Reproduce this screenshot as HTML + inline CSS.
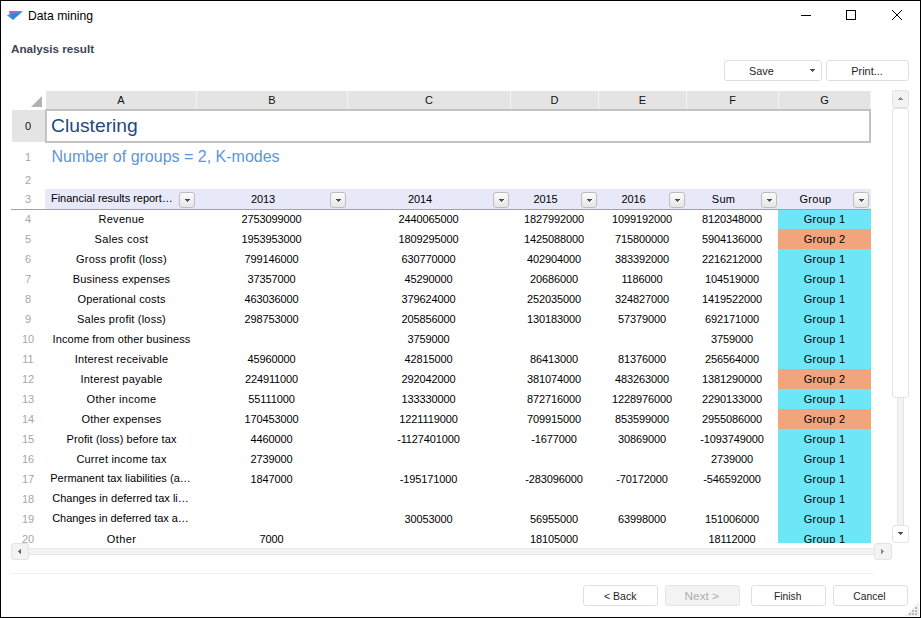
<!DOCTYPE html>
<html><head><meta charset="utf-8"><title>Data mining</title>
<style>
*{box-sizing:border-box;margin:0;padding:0}
html,body{width:921px;height:618px;overflow:hidden;background:#fff}
body{font-family:"Liberation Sans",sans-serif;position:relative}
#win{position:absolute;left:0;top:0;width:921px;height:618px;border:1px solid #000;background:#fff;overflow:hidden}
.a{position:absolute;white-space:nowrap}
#title{left:27px;top:7px;font-size:12.2px;line-height:16px;color:#000}
#sub{left:10px;top:41px;font-size:11.68px;line-height:14px;font-weight:bold;color:#3d4555}
.btn{position:absolute;border:1px solid #dfdfdf;border-radius:3px;background:#fff;font-size:11.8px;line-height:19px;height:21px;padding-top:1px;text-align:center;color:#1e1e1e}
.btn span.t{display:inline-block;margin-right:1.4px;transform:scaleX(.875);transform-origin:50% 50%}
.btn.dis{background:#f3f3f3;color:#aeaeb4;border-color:#e4e4e4}
#sheet{position:absolute;left:0;top:0;width:921px;height:542px;overflow:hidden;font-size:11px;color:#000}
.n{letter-spacing:-0.12px}
.l{letter-spacing:0.27px}
.ch{position:absolute;top:90px;height:18px;background:#e4e4e4;text-align:center;font-size:11px;line-height:18px;color:#111;border-right:1px solid #f3f3f3}
.rn{position:absolute;left:10px;width:34px;text-align:center;color:#a6a6a6;font-size:11px}
.c{position:absolute;text-align:center;white-space:nowrap;overflow:hidden}
.g1{background:#6de7f7}
.g2{background:#f2a57d}
.h3{background:#e7e9f8}
.dd{position:absolute;width:16px;height:16px;border:1px solid #bebebe;border-radius:3px;background:linear-gradient(#fbfbfb,#e6e6e6)}
.dd:after,.ar{content:"";position:absolute;left:7px;top:8px;width:1px;height:1px;background:#606060;box-shadow:-1px -1px 0 #555,1px -1px 0 #555,0 -1px 0 #555,-2px -2px 0 #4c4c4c,-1px -2px 0 #4c4c4c,0 -2px 0 #4c4c4c,1px -2px 0 #4c4c4c,2px -2px 0 #4c4c4c}
</style></head><body><div id="win">

<svg class="a" style="left:6px;top:10px" width="18" height="11" viewBox="0 0 18 11"><polygon points="1.8,0.1 15.9,0.1 8.6,2.6 2.8,3.6" fill="#b560c4"/><polygon points="15.9,0.2 6,9 0.2,4.3 3.8,3.1" fill="#2b8bd8"/><polygon points="0.2,4.3 3.7,3.2 4.4,7.6" fill="#5b88c9"/></svg>
<div id="title" class="a">Data mining</div>
<svg class="a" style="left:799px;top:8px" width="110" height="14" viewBox="0 0 110 14"><path d="M1 6.5H11" stroke="#000" stroke-width="1" fill="none"/><rect x="46.5" y="1.5" width="9" height="9" stroke="#000" stroke-width="1" fill="none"/><path d="M92 1L102 11M102 1L92 11" stroke="#000" stroke-width="1" fill="none"/></svg>
<div id="sub" class="a">Analysis result</div>
<div class="btn" style="left:723px;top:59px;width:98px;padding-right:22px"><span class="t" style="transform:scaleX(0.92)">Save</span><span class="ar" style="left:87px;top:10px"></span></div>
<div class="btn" style="left:825px;top:59px;width:83px"><span class="t" style="transform:scaleX(0.93)">Print...</span></div>
<div id="sheet">
<svg class="a" style="left:30px;top:95px" width="11" height="11"><polygon points="11,0 11,11 0,11" fill="#b2b2b2"/></svg>
<div class="ch" style="left:45px;width:151px">A</div>
<div class="ch" style="left:196px;width:151px">B</div>
<div class="ch" style="left:347px;width:163px">C</div>
<div class="ch" style="left:510px;width:88px">D</div>
<div class="ch" style="left:598px;width:88px">E</div>
<div class="ch" style="left:686px;width:92px">F</div>
<div class="ch" style="left:778px;width:92px">G</div>
<div class="rn" style="top:109px;height:32px;line-height:32px;background:#e4e4e4;color:#111;left:11px;text-indent:-2px;">0</div>
<div class="rn" style="top:141px;height:30px;line-height:30px;">1</div>
<div class="rn" style="top:171px;height:17px;line-height:17px;">2</div>
<div class="rn" style="top:188px;height:20px;line-height:20px;">3</div>
<div class="a" style="left:44px;top:108px;width:826px;height:34px;border:2px solid #c3c3c3;background:#fff"></div>
<div class="a" style="left:50.1px;top:112.6px;font-size:19.25px;line-height:24px;color:#1f497d">Clustering</div>
<div class="a" style="left:50.5px;top:146px;font-size:16px;line-height:20px;color:#5f95d9">Number of groups = 2, K-modes</div>
<div class="a h3" style="left:44px;top:188px;width:826px;height:20px"></div>
<div class="c l" style="left:50px;top:187px;width:129px;height:20px;line-height:20px;text-align:left;letter-spacing:-0.02px;">Financial results report…</div>
<div class="dd" style="left:178px;top:191px"></div>
<div class="c n" style="left:195px;top:188px;width:134px;height:20px;line-height:20px">2013</div>
<div class="dd" style="left:329px;top:191px"></div>
<div class="c n" style="left:346px;top:188px;width:146px;height:20px;line-height:20px">2014</div>
<div class="dd" style="left:492px;top:191px"></div>
<div class="c n" style="left:509px;top:188px;width:71px;height:20px;line-height:20px">2015</div>
<div class="dd" style="left:580px;top:191px"></div>
<div class="c n" style="left:597px;top:188px;width:71px;height:20px;line-height:20px">2016</div>
<div class="dd" style="left:668px;top:191px"></div>
<div class="c l" style="left:685px;top:188px;width:75px;height:20px;line-height:20px">Sum</div>
<div class="dd" style="left:760px;top:191px"></div>
<div class="c l" style="left:777px;top:188px;width:75px;height:20px;line-height:20px">Group</div>
<div class="dd" style="left:852px;top:191px"></div>
<div class="rn" style="top:208px;height:20px;line-height:20px">4</div>
<div class="c l" style="left:45px;top:208px;width:151px;height:20px;line-height:20px;letter-spacing:0.29px;">Revenue</div>
<div class="c n" style="left:195px;top:208px;width:151px;height:20px;line-height:20px">2753099000</div>
<div class="c n" style="left:346px;top:208px;width:163px;height:20px;line-height:20px">2440065000</div>
<div class="c n" style="left:509px;top:208px;width:88px;height:20px;line-height:20px">1827992000</div>
<div class="c n" style="left:597px;top:208px;width:88px;height:20px;line-height:20px">1099192000</div>
<div class="c n" style="left:685px;top:208px;width:92px;height:20px;line-height:20px">8120348000</div>
<div class="c l g1" style="left:777px;top:208px;width:93px;height:20px;line-height:20px">Group 1</div>
<div class="rn" style="top:228px;height:20px;line-height:20px">5</div>
<div class="c l" style="left:45px;top:228px;width:151px;height:20px;line-height:20px;letter-spacing:0.31px;">Sales cost</div>
<div class="c n" style="left:195px;top:228px;width:151px;height:20px;line-height:20px">1953953000</div>
<div class="c n" style="left:346px;top:228px;width:163px;height:20px;line-height:20px">1809295000</div>
<div class="c n" style="left:509px;top:228px;width:88px;height:20px;line-height:20px">1425088000</div>
<div class="c n" style="left:597px;top:228px;width:88px;height:20px;line-height:20px">715800000</div>
<div class="c n" style="left:685px;top:228px;width:92px;height:20px;line-height:20px">5904136000</div>
<div class="c l g2" style="left:777px;top:228px;width:93px;height:20px;line-height:20px">Group 2</div>
<div class="rn" style="top:248px;height:20px;line-height:20px">6</div>
<div class="c l" style="left:45px;top:248px;width:151px;height:20px;line-height:20px;letter-spacing:0.21px;">Gross profit (loss)</div>
<div class="c n" style="left:195px;top:248px;width:151px;height:20px;line-height:20px">799146000</div>
<div class="c n" style="left:346px;top:248px;width:163px;height:20px;line-height:20px">630770000</div>
<div class="c n" style="left:509px;top:248px;width:88px;height:20px;line-height:20px">402904000</div>
<div class="c n" style="left:597px;top:248px;width:88px;height:20px;line-height:20px">383392000</div>
<div class="c n" style="left:685px;top:248px;width:92px;height:20px;line-height:20px">2216212000</div>
<div class="c l g1" style="left:777px;top:248px;width:93px;height:20px;line-height:20px">Group 1</div>
<div class="rn" style="top:268px;height:20px;line-height:20px">7</div>
<div class="c l" style="left:45px;top:268px;width:151px;height:20px;line-height:20px;letter-spacing:0.16px;">Business expenses</div>
<div class="c n" style="left:195px;top:268px;width:151px;height:20px;line-height:20px">37357000</div>
<div class="c n" style="left:346px;top:268px;width:163px;height:20px;line-height:20px">45290000</div>
<div class="c n" style="left:509px;top:268px;width:88px;height:20px;line-height:20px">20686000</div>
<div class="c n" style="left:597px;top:268px;width:88px;height:20px;line-height:20px">1186000</div>
<div class="c n" style="left:685px;top:268px;width:92px;height:20px;line-height:20px">104519000</div>
<div class="c l g1" style="left:777px;top:268px;width:93px;height:20px;line-height:20px">Group 1</div>
<div class="rn" style="top:288px;height:20px;line-height:20px">8</div>
<div class="c l" style="left:45px;top:288px;width:151px;height:20px;line-height:20px;letter-spacing:0.15px;">Operational costs</div>
<div class="c n" style="left:195px;top:288px;width:151px;height:20px;line-height:20px">463036000</div>
<div class="c n" style="left:346px;top:288px;width:163px;height:20px;line-height:20px">379624000</div>
<div class="c n" style="left:509px;top:288px;width:88px;height:20px;line-height:20px">252035000</div>
<div class="c n" style="left:597px;top:288px;width:88px;height:20px;line-height:20px">324827000</div>
<div class="c n" style="left:685px;top:288px;width:92px;height:20px;line-height:20px">1419522000</div>
<div class="c l g1" style="left:777px;top:288px;width:93px;height:20px;line-height:20px">Group 1</div>
<div class="rn" style="top:308px;height:20px;line-height:20px">9</div>
<div class="c l" style="left:45px;top:308px;width:151px;height:20px;line-height:20px;letter-spacing:0.21px;">Sales profit (loss)</div>
<div class="c n" style="left:195px;top:308px;width:151px;height:20px;line-height:20px">298753000</div>
<div class="c n" style="left:346px;top:308px;width:163px;height:20px;line-height:20px">205856000</div>
<div class="c n" style="left:509px;top:308px;width:88px;height:20px;line-height:20px">130183000</div>
<div class="c n" style="left:597px;top:308px;width:88px;height:20px;line-height:20px">57379000</div>
<div class="c n" style="left:685px;top:308px;width:92px;height:20px;line-height:20px">692171000</div>
<div class="c l g1" style="left:777px;top:308px;width:93px;height:20px;line-height:20px">Group 1</div>
<div class="rn" style="top:328px;height:20px;line-height:20px">10</div>
<div class="c l" style="left:45px;top:328px;width:151px;height:20px;line-height:20px;letter-spacing:0.08px;">Income from other business</div>
<div class="c n" style="left:346px;top:328px;width:163px;height:20px;line-height:20px">3759000</div>
<div class="c n" style="left:685px;top:328px;width:92px;height:20px;line-height:20px">3759000</div>
<div class="c l g1" style="left:777px;top:328px;width:93px;height:20px;line-height:20px">Group 1</div>
<div class="rn" style="top:348px;height:20px;line-height:20px">11</div>
<div class="c l" style="left:45px;top:348px;width:151px;height:20px;line-height:20px;letter-spacing:0.2px;">Interest receivable</div>
<div class="c n" style="left:195px;top:348px;width:151px;height:20px;line-height:20px">45960000</div>
<div class="c n" style="left:346px;top:348px;width:163px;height:20px;line-height:20px">42815000</div>
<div class="c n" style="left:509px;top:348px;width:88px;height:20px;line-height:20px">86413000</div>
<div class="c n" style="left:597px;top:348px;width:88px;height:20px;line-height:20px">81376000</div>
<div class="c n" style="left:685px;top:348px;width:92px;height:20px;line-height:20px">256564000</div>
<div class="c l g1" style="left:777px;top:348px;width:93px;height:20px;line-height:20px">Group 1</div>
<div class="rn" style="top:368px;height:20px;line-height:20px">12</div>
<div class="c l" style="left:45px;top:368px;width:151px;height:20px;line-height:20px;letter-spacing:0.24px;">Interest payable</div>
<div class="c n" style="left:195px;top:368px;width:151px;height:20px;line-height:20px">224911000</div>
<div class="c n" style="left:346px;top:368px;width:163px;height:20px;line-height:20px">292042000</div>
<div class="c n" style="left:509px;top:368px;width:88px;height:20px;line-height:20px">381074000</div>
<div class="c n" style="left:597px;top:368px;width:88px;height:20px;line-height:20px">483263000</div>
<div class="c n" style="left:685px;top:368px;width:92px;height:20px;line-height:20px">1381290000</div>
<div class="c l g2" style="left:777px;top:368px;width:93px;height:20px;line-height:20px">Group 2</div>
<div class="rn" style="top:388px;height:20px;line-height:20px">13</div>
<div class="c l" style="left:45px;top:388px;width:151px;height:20px;line-height:20px;letter-spacing:0.33px;">Other income</div>
<div class="c n" style="left:195px;top:388px;width:151px;height:20px;line-height:20px">55111000</div>
<div class="c n" style="left:346px;top:388px;width:163px;height:20px;line-height:20px">133330000</div>
<div class="c n" style="left:509px;top:388px;width:88px;height:20px;line-height:20px">872716000</div>
<div class="c n" style="left:597px;top:388px;width:88px;height:20px;line-height:20px">1228976000</div>
<div class="c n" style="left:685px;top:388px;width:92px;height:20px;line-height:20px">2290133000</div>
<div class="c l g1" style="left:777px;top:388px;width:93px;height:20px;line-height:20px">Group 1</div>
<div class="rn" style="top:408px;height:20px;line-height:20px">14</div>
<div class="c l" style="left:45px;top:408px;width:151px;height:20px;line-height:20px;letter-spacing:0.17px;">Other expenses</div>
<div class="c n" style="left:195px;top:408px;width:151px;height:20px;line-height:20px">170453000</div>
<div class="c n" style="left:346px;top:408px;width:163px;height:20px;line-height:20px">1221119000</div>
<div class="c n" style="left:509px;top:408px;width:88px;height:20px;line-height:20px">709915000</div>
<div class="c n" style="left:597px;top:408px;width:88px;height:20px;line-height:20px">853599000</div>
<div class="c n" style="left:685px;top:408px;width:92px;height:20px;line-height:20px">2955086000</div>
<div class="c l g2" style="left:777px;top:408px;width:93px;height:20px;line-height:20px">Group 2</div>
<div class="rn" style="top:428px;height:20px;line-height:20px">15</div>
<div class="c l" style="left:45px;top:428px;width:151px;height:20px;line-height:20px;letter-spacing:0.1px;">Profit (loss) before tax</div>
<div class="c n" style="left:195px;top:428px;width:151px;height:20px;line-height:20px">4460000</div>
<div class="c n" style="left:346px;top:428px;width:163px;height:20px;line-height:20px">-1127401000</div>
<div class="c n" style="left:509px;top:428px;width:88px;height:20px;line-height:20px">-1677000</div>
<div class="c n" style="left:597px;top:428px;width:88px;height:20px;line-height:20px">30869000</div>
<div class="c n" style="left:685px;top:428px;width:92px;height:20px;line-height:20px">-1093749000</div>
<div class="c l g1" style="left:777px;top:428px;width:93px;height:20px;line-height:20px">Group 1</div>
<div class="rn" style="top:448px;height:20px;line-height:20px">16</div>
<div class="c l" style="left:45px;top:448px;width:151px;height:20px;line-height:20px;letter-spacing:0.2px;">Curret income tax</div>
<div class="c n" style="left:195px;top:448px;width:151px;height:20px;line-height:20px">2739000</div>
<div class="c n" style="left:685px;top:448px;width:92px;height:20px;line-height:20px">2739000</div>
<div class="c l g1" style="left:777px;top:448px;width:93px;height:20px;line-height:20px">Group 1</div>
<div class="rn" style="top:468px;height:20px;line-height:20px">17</div>
<div class="c l" style="left:44px;top:467px;width:151px;height:20px;line-height:20px;letter-spacing:0.02px;">Permanent tax liabilities (a…</div>
<div class="c n" style="left:195px;top:468px;width:151px;height:20px;line-height:20px">1847000</div>
<div class="c n" style="left:346px;top:468px;width:163px;height:20px;line-height:20px">-195171000</div>
<div class="c n" style="left:509px;top:468px;width:88px;height:20px;line-height:20px">-283096000</div>
<div class="c n" style="left:597px;top:468px;width:88px;height:20px;line-height:20px">-70172000</div>
<div class="c n" style="left:685px;top:468px;width:92px;height:20px;line-height:20px">-546592000</div>
<div class="c l g1" style="left:777px;top:468px;width:93px;height:20px;line-height:20px">Group 1</div>
<div class="rn" style="top:488px;height:20px;line-height:20px">18</div>
<div class="c l" style="left:44px;top:487px;width:151px;height:20px;line-height:20px;letter-spacing:0.01px;">Changes in deferred tax li…</div>
<div class="c l g1" style="left:777px;top:488px;width:93px;height:20px;line-height:20px">Group 1</div>
<div class="rn" style="top:508px;height:20px;line-height:20px">19</div>
<div class="c l" style="left:44px;top:507px;width:151px;height:20px;line-height:20px;letter-spacing:-0.04px;">Changes in deferred tax a…</div>
<div class="c n" style="left:346px;top:508px;width:163px;height:20px;line-height:20px">30053000</div>
<div class="c n" style="left:509px;top:508px;width:88px;height:20px;line-height:20px">56955000</div>
<div class="c n" style="left:597px;top:508px;width:88px;height:20px;line-height:20px">63998000</div>
<div class="c n" style="left:685px;top:508px;width:92px;height:20px;line-height:20px">151006000</div>
<div class="c l g1" style="left:777px;top:508px;width:93px;height:20px;line-height:20px">Group 1</div>
<div class="rn" style="top:528px;height:20px;line-height:20px">20</div>
<div class="c l" style="left:45px;top:528px;width:151px;height:20px;line-height:20px;letter-spacing:0.37px;">Other</div>
<div class="c n" style="left:195px;top:528px;width:151px;height:20px;line-height:20px">7000</div>
<div class="c n" style="left:509px;top:528px;width:88px;height:20px;line-height:20px">18105000</div>
<div class="c n" style="left:685px;top:528px;width:92px;height:20px;line-height:20px">18112000</div>
<div class="c l g1" style="left:777px;top:528px;width:93px;height:20px;line-height:20px">Group 1</div>
<div class="a" style="left:10px;top:208px;width:860px;height:1px;background:#a2a2a2"></div>
</div>
<div class="a" style="left:896px;top:100px;width:7px;height:430px;border:1px solid #e6e6e6;background:#f3f3f3"></div>
<div class="a" style="left:891px;top:89px;width:17px;height:18px;border:1px solid #e3e3e3;border-radius:3px;background:#f3f3f3"></div>
<svg class="a" style="left:897px;top:96px" width="5" height="3" shape-rendering="crispEdges" fill="#8c8c8c"><rect x="2" y="0" width="1" height="1"/><rect x="1" y="1" width="3" height="1"/><rect x="0" y="2" width="5" height="1"/></svg>
<div class="a" style="left:891px;top:107px;width:17px;height:290px;border:1px solid #e3e3e3;border-radius:3px;background:#fff"></div>
<div class="a" style="left:891px;top:524px;width:17px;height:18px;border:1px solid #e3e3e3;border-radius:3px;background:#fff"></div>
<svg class="a" style="left:897px;top:531px" width="5" height="3" shape-rendering="crispEdges" fill="#505050"><rect x="0" y="0" width="5" height="1"/><rect x="1" y="1" width="3" height="1"/><rect x="2" y="2" width="1" height="1"/></svg>
<div class="a" style="left:20px;top:547px;width:860px;height:7px;border:1px solid #e6e6e6;background:#f3f3f3"></div>
<div class="a" style="left:10px;top:542px;width:18px;height:17px;border:1px solid #e3e3e3;border-radius:3px;background:#f3f3f3"></div>
<svg class="a" style="left:17px;top:548px" width="3" height="5" shape-rendering="crispEdges" fill="#6a6a6a"><rect x="0" y="2" width="1" height="1"/><rect x="1" y="1" width="1" height="3"/><rect x="2" y="0" width="1" height="5"/></svg>
<div class="a" style="left:873px;top:542px;width:18px;height:17px;border:1px solid #e3e3e3;border-radius:3px;background:#f3f3f3"></div>
<svg class="a" style="left:880px;top:548px" width="3" height="5" shape-rendering="crispEdges" fill="#8c8c8c"><rect x="0" y="0" width="1" height="5"/><rect x="1" y="1" width="1" height="3"/><rect x="2" y="2" width="1" height="1"/></svg>
<div class="a" style="left:10px;top:572px;width:863px;height:1px;background:#efefef"></div>
<div class="btn" style="left:582px;top:584px;width:75px"><span class="t" style="transform:scaleX(0.89)">&lt; Back</span></div>
<div class="btn dis" style="left:664px;top:584px;width:75px"><span class="t" style="transform:scaleX(1.0)">Next &gt;</span></div>
<div class="btn" style="left:750px;top:584px;width:75px"><span class="t" style="transform:scaleX(0.87)">Finish</span></div>
<div class="btn" style="left:832px;top:584px;width:75px"><span class="t" style="transform:scaleX(0.875)">Cancel</span></div>
<svg class="a" style="left:904px;top:601px" width="14" height="14"><polygon points="14,0 14,14 0,14" fill="#eeeeee"/><g fill="#b9b9b9"><rect x="10" y="5" width="2" height="2"/><rect x="7" y="8" width="2" height="2"/><rect x="10" y="8" width="2" height="2"/><rect x="4" y="11" width="2" height="2"/><rect x="7" y="11" width="2" height="2"/><rect x="10" y="11" width="2" height="2"/></g></svg>
</div></body></html>
